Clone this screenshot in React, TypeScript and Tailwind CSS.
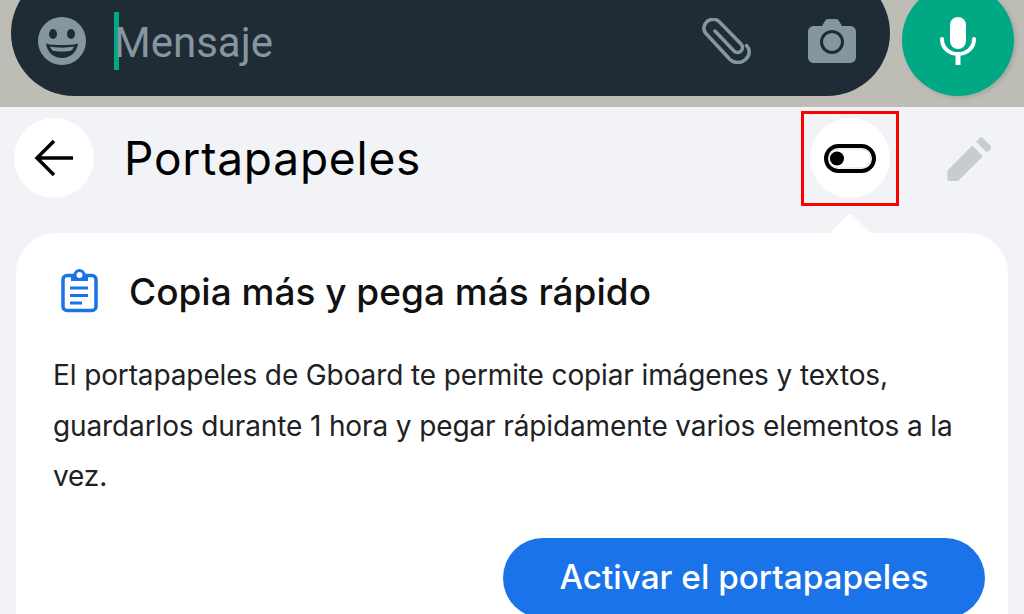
const sans = "font-['Inter','Noto_Sans',sans-serif]";

const App = () => {
  return (
    <div className={`relative w-[1024px] h-[614px] overflow-hidden bg-[#f1f3f6] ${sans}`}>
      {/* WhatsApp input behind the keyboard */}
      <div className="h-[107px] bg-[#bdbdb6] flex items-start pl-[11px] gap-[12px] overflow-hidden">
        <div className="w-[879px] h-[126px] -mt-[30px] shrink-0 rounded-[63px] bg-[#202c35] flex items-center pl-[27px] pr-[34px] pt-[16px] text-[#8696a0]">
          <svg width="48" height="48" viewBox="0 0 48 48" className="shrink-0">
            <circle cx="24" cy="24" r="24" fill="#8696a0" />
            <ellipse cx="15" cy="17" rx="4" ry="5" fill="#202c35" />
            <ellipse cx="33" cy="17" rx="4" ry="5" fill="#202c35" />
            <path d="M8 26.500c5 2 27 2 32 0-1 9-8 14.500-16 14.500S9 35.500 8 26.500z" fill="#202c35" />
            <path d="M12 29.500c6 1.500 18 1.500 24 0-1 2.500-2 3.500-3 4.200-5 1-13 1-18 0-1-.7-2-1.700-3-4.200z" fill="#8696a0" />
          </svg>
          <div className="w-[5px] h-[58px] bg-[#00a884] ml-[28px] shrink-0" />
          <span className="text-[42px] leading-none font-['Roboto',sans-serif] -ml-[5px] mt-[3px] flex-1">Mensaje</span>
          <svg width="50" height="46" viewBox="0 0 50 46" fill="none" stroke="#8696a0" strokeWidth="3.500" strokeLinecap="round" className="shrink-0">
            <path d="M14 13 33 33c2 2 5 2 7 0s2-5 0-7L18 3.500c-3-3-8-3-12 0-4 4-4 9-1 12l24 26c4 4 11 4 15.500 0 4.500-4 5-10 1-14" />
          </svg>
          <svg width="48" height="44" viewBox="0 0 48 44" className="ml-[57px] shrink-0">
            <path d="M6 7h8l3-5c.5-1 1.500-2 3-2h8c1.500 0 2.500 1 3 2l3 5h8c3.500 0 6 2.500 6 6v25c0 3.500-2.500 6-6 6H6c-3.500 0-6-2.500-6-6V13c0-3.500 2.500-6 6-6z" fill="#8696a0" />
            <circle cx="24" cy="23" r="10.500" fill="none" stroke="#202c35" strokeWidth="3" />
          </svg>
        </div>
        <div className="w-[112px] h-[112px] -mt-[16px] shrink-0 rounded-full bg-[#00a884] flex items-center justify-center pt-[1px] shadow-[2px_2px_4px_rgba(0,0,0,0.12)]">
          <svg width="36" height="48" viewBox="0 0 36 48" fill="none">
            <rect x="10" y="0" width="16" height="32" rx="8" fill="#fff" />
            <path d="M2 22c0 9 7 15 16 15s16-6 16-15" stroke="#fff" strokeWidth="4" strokeLinecap="round" />
            <rect x="15.500" y="36" width="5" height="12" fill="#fff" />
          </svg>
        </div>
      </div>

      {/* Clipboard header */}
      <div className="h-[126px] flex items-center pl-[14px] pr-[32px] pb-[24px]">
        <div className="w-[80px] h-[80px] rounded-full bg-white flex items-center justify-center shrink-0">
          <svg width="40" height="38" viewBox="0 0 40 38" fill="none" stroke="#000" strokeWidth="3.500">
            <path d="M39 19H3M20 2 3 19l17 17" />
          </svg>
        </div>
        <h1 className="ml-[30px] text-[46px] leading-none font-normal text-black flex-1 tracking-[0.8px]">Portapapeles</h1>
        <div className="w-[80px] h-[80px] rounded-full bg-white flex items-center justify-center shrink-0">
          <svg width="52" height="29" viewBox="0 0 52 29" fill="none">
            <rect x="2" y="2" width="48" height="25" rx="12.500" stroke="#000" strokeWidth="4" />
            <rect x="5" y="5" width="42" height="19" rx="9.500" stroke="#dcdcdc" strokeWidth="1" />
            <circle cx="13" cy="14.500" r="7" fill="#000" />
          </svg>
        </div>
        <svg width="45" height="44" viewBox="0 0 46 46" className="ml-[57px] mt-[1px] shrink-0">
          <path d="M0 46V35L26 9l11 11-26 26z" fill="#c8cccf" />
          <path d="M30 5l3-3.500c1.500-1.500 3-1.500 4.500 0l7 7c1.500 1.500 1.500 3 0 4.500L41 16z" fill="#c8cccf" />
        </svg>
      </div>

      {/* Tooltip card */}
      <div className="relative mx-[16px] h-[500px] rounded-[40px] bg-white pl-[38px] pr-[23px] pt-[34px]">
        <div className="absolute -top-[14px] left-[819px] w-[30px] h-[30px] rotate-45 rounded-tl-[4px] bg-white" />
        <div className="relative flex items-center h-[48px]">
          <svg width="44" height="44" viewBox="0 0 44 44" fill="none" className="shrink-0">
            <rect x="9" y="6.500" width="33" height="35" rx="4" stroke="#1a73e8" strokeWidth="3.500" />
            <path d="M17 7h17v5H17z" fill="#1a73e8" />
            <circle cx="25.500" cy="6" r="4.500" fill="#fff" stroke="#1a73e8" strokeWidth="3" />
            <path d="M16 19h18M16 26.500h18M16 34h12" stroke="#1a73e8" strokeWidth="3" />
          </svg>
          <h2 className="ml-[31px] text-[37px] leading-none font-medium text-[#111]">Copia más y pega más rápido</h2>
        </div>
        <p className="-ml-[1px] mt-[35px] text-[28px] leading-[50.500px] text-[#202124] font-normal tracking-[-0.12px]">
          El portapapeles de Gboard te permite copiar imágenes y textos, guardarlos durante 1 hora y pegar rápidamente varios elementos a la vez.
        </p>
        <div className="flex justify-end mt-[36px]">
          <button className="h-[80px] w-[482px] rounded-[40px] bg-[#1a73e8] text-white text-[33.300px] font-medium">Activar el portapapeles</button>
        </div>
      </div>

      {/* Red annotation */}
      <div className="absolute left-[801px] top-[111px] w-[98px] h-[95px] border-[3px] border-[#ff0000]" />
    </div>
  );
};

export default App;
